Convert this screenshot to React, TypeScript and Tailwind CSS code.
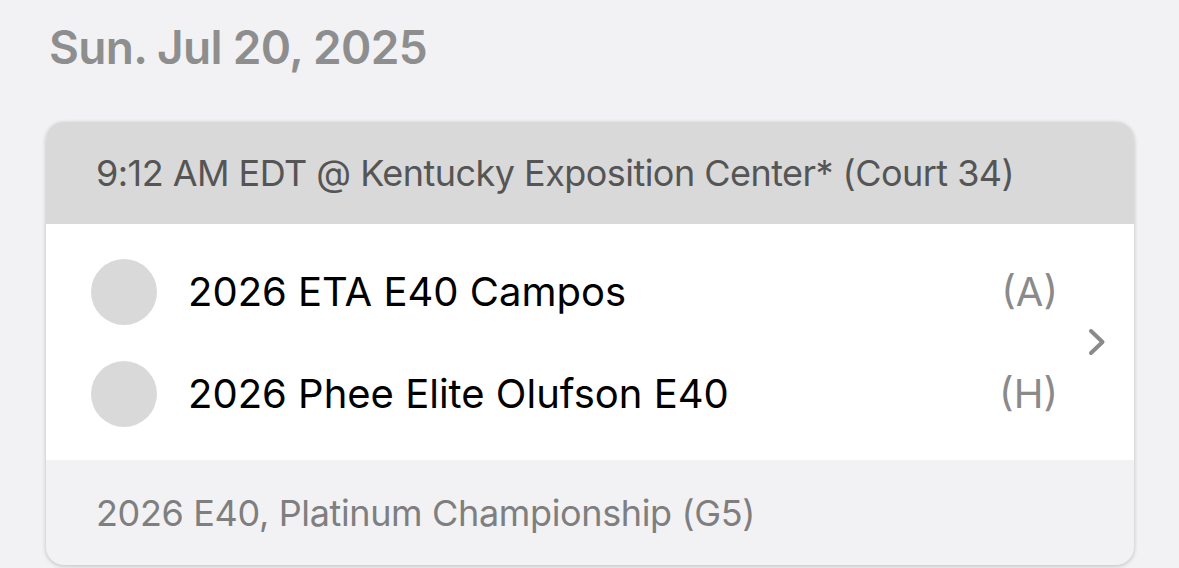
import React from "react";

const font = { fontFamily: "Inter, 'Noto Sans', sans-serif" };

function Chevron() {
  return (
    <svg width="21" height="30" viewBox="0 0 21 30" fill="none">
      <path d="M4 4 L15.5 15 L4 26" stroke="#8a8a8a" strokeWidth="4" strokeLinecap="round" strokeLinejoin="round" />
    </svg>
  );
}

function TeamRow({ name, tag }: { name: string; tag: string }) {
  return (
    <div className="flex h-[102px] items-center">
      <div className="h-[66px] w-[66px] shrink-0 rounded-full bg-[#d9d9d9]" />
      <div className="ml-[31px] flex-1 text-[40px] leading-none text-black">{name}</div>
      <div className="text-[40px] leading-none text-[#8a8a8a]">{tag}</div>
    </div>
  );
}

export default function App() {
  return (
    <div className="h-[568px] w-[1179px] overflow-hidden bg-[#f2f2f4]" style={font}>
      <div className="h-[122px] pl-[49px] pt-[24px]">
        <div className="text-[46px] font-semibold leading-none tracking-[-0.015em] text-[#8e8e8e]">Sun. Jul 20, 2025</div>
      </div>
      <div className="ml-[46px] w-[1088px] overflow-hidden rounded-[18px] bg-[#f2f2f4] shadow-[0_1px_4px_rgba(0,0,0,0.22)]">
        <div className="flex h-[102px] items-center bg-[#d9d9d9] px-[50px]">
          <div className="text-[36px] leading-none tracking-[-0.015em] text-[#555555]">
            9:12 AM EDT @ Kentucky Exposition Center* (Court 34)
          </div>
        </div>
        <div className="flex h-[236px] items-center bg-white">
          <div className="flex-1 pl-[45px] pt-[2px]">
            <TeamRow name="2026 ETA E40 Campos" tag="(A)" />
            <TeamRow name="2026 Phee Elite Olufson E40" tag="(H)" />
          </div>
          <div className="ml-[29px] mr-[26px] flex items-center">
            <Chevron />
          </div>
        </div>
        <div className="flex h-[105px] items-center px-[50px]">
          <div className="text-[36px] leading-none tracking-[-0.01em] text-[#7f7f7f]">
            2026 E40, Platinum Championship (G5)
          </div>
        </div>
      </div>
    </div>
  );
}
